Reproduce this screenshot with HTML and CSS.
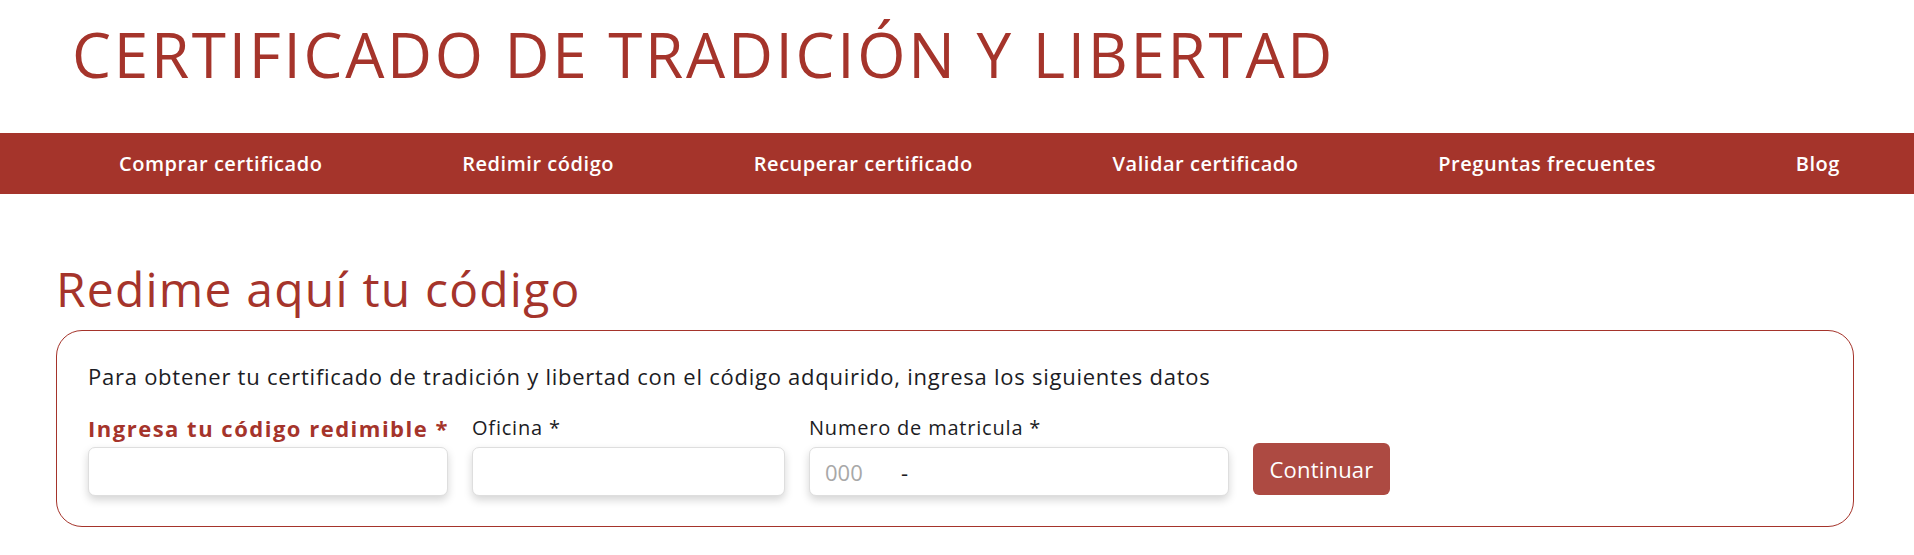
FILE: index.html
```html
<!DOCTYPE html>
<html lang="es">
<head>
<meta charset="utf-8">
<title>Certificado de tradición y libertad</title>
<link rel="stylesheet" href="styles.css">
</head>
<body>
<header class="site-header">
  <h1 class="site-title">CERTIFICADO DE TRADICIÓN Y LIBERTAD</h1>
</header>
<nav class="main-nav">
  <a class="nav-link" href="#">Comprar certificado</a>
  <a class="nav-link" href="#">Redimir código</a>
  <a class="nav-link" href="#">Recuperar certificado</a>
  <a class="nav-link" href="#">Validar certificado</a>
  <a class="nav-link" href="#">Preguntas frecuentes</a>
  <a class="nav-link" href="#">Blog</a>
</nav>
<main class="content">
  <h2 class="page-heading">Redime aquí tu código</h2>
  <section class="card">
    <p class="card-intro">Para obtener tu certificado de tradición y libertad con el código adquirido, ingresa los siguientes datos</p>
    <form class="form-row" onsubmit="return false;">
      <div class="field field-code">
        <label class="field-label label-strong">Ingresa tu código redimible *</label>
        <input class="text-input" type="text">
      </div>
      <div class="field field-office">
        <label class="field-label">Oficina *</label>
        <input class="text-input" type="text">
      </div>
      <div class="field field-matricula">
        <label class="field-label">Numero de matricula *</label>
        <div class="text-input split-input">
          <input class="split-part part-prefix" type="text" placeholder="000">
          <span class="split-sep">-</span>
          <input class="split-part part-number" type="text">
        </div>
      </div>
      <button class="btn-continue" type="submit">Continuar</button>
    </form>
  </section>
</main>
</body>
</html>
```
FILE: styles.css
```css
* { box-sizing: border-box; }

html, body {
  margin: 0;
  padding: 0;
  background: #ffffff;
}

body {
  font-family: "Open Sans", "Noto Sans", sans-serif;
  color: #1c1c24;
  width: 1914px;
}

.site-header {
  height: 133px;
  padding: 17px 0 0 72px;
}

.site-title {
  margin: 0;
  font-size: 62px;
  line-height: 74px;
  font-weight: 400;
  color: #a5342b;
  letter-spacing: 2.7px;
}

.main-nav {
  height: 61px;
  background: #a5342b;
  display: flex;
  align-items: center;
  justify-content: space-between;
  padding: 0 74px 0 119px;
}

.nav-link {
  color: #ffffff;
  text-decoration: none;
  font-size: 20px;
  font-weight: 600;
  line-height: 26px;
  letter-spacing: 0.55px;
}

.content {
  padding: 66px 60px 0 56px;
}

.page-heading {
  margin: 0 0 12px 0;
  font-size: 48px;
  line-height: 58px;
  font-weight: 400;
  color: #a5342b;
  letter-spacing: 1.2px;
}

.card {
  height: 197px;
  border: 1px solid #a5342b;
  border-radius: 26px;
  padding: 30px 30px 0 31px;
}

.card-intro {
  margin: 0 0 24px 0;
  font-size: 22px;
  line-height: 30px;
  letter-spacing: 0.75px;
}

.form-row {
  display: flex;
  align-items: flex-end;
  gap: 24px;
}

.field {
  display: flex;
  flex-direction: column;
  gap: 6px;
}

.field-code { width: 360px; }
.field-office { width: 313px; }
.field-matricula { width: 420px; }

.field-label {
  font-size: 20px;
  line-height: 26px;
  letter-spacing: 0.8px;
  color: #1c1c24;
  white-space: nowrap;
}

.label-strong {
  font-size: 22px;
  font-weight: 700;
  letter-spacing: 1.5px;
  color: #a5342b;
}

.text-input {
  height: 49px;
  width: 100%;
  border: 1px solid #dedede;
  border-radius: 7px;
  background: #ffffff;
  box-shadow: 0 4px 8px rgba(0, 0, 0, 0.17);
  font-family: inherit;
  font-size: 20px;
  padding: 0 15px;
  outline: none;
}

.split-input {
  display: flex;
  align-items: center;
}

.split-part {
  border: none;
  outline: none;
  background: transparent;
  font-family: inherit;
  font-size: 22px;
  color: #1c1c24;
  padding: 0;
  height: 100%;
}

.part-prefix { width: 76px; }
.part-number { flex: 1; margin-left: 12px; }

.split-part::placeholder {
  color: #a8a8a8;
}

.split-sep {
  font-size: 22px;
  color: #1c1c24;
}

.btn-continue {
  width: 137px;
  height: 52px;
  margin-bottom: 1px;
  border: none;
  border-radius: 6px;
  background: #ad4a42;
  color: #ffffff;
  font-family: inherit;
  font-size: 22px;
  font-weight: 500;
  letter-spacing: 0.2px;
  cursor: pointer;
}
```
